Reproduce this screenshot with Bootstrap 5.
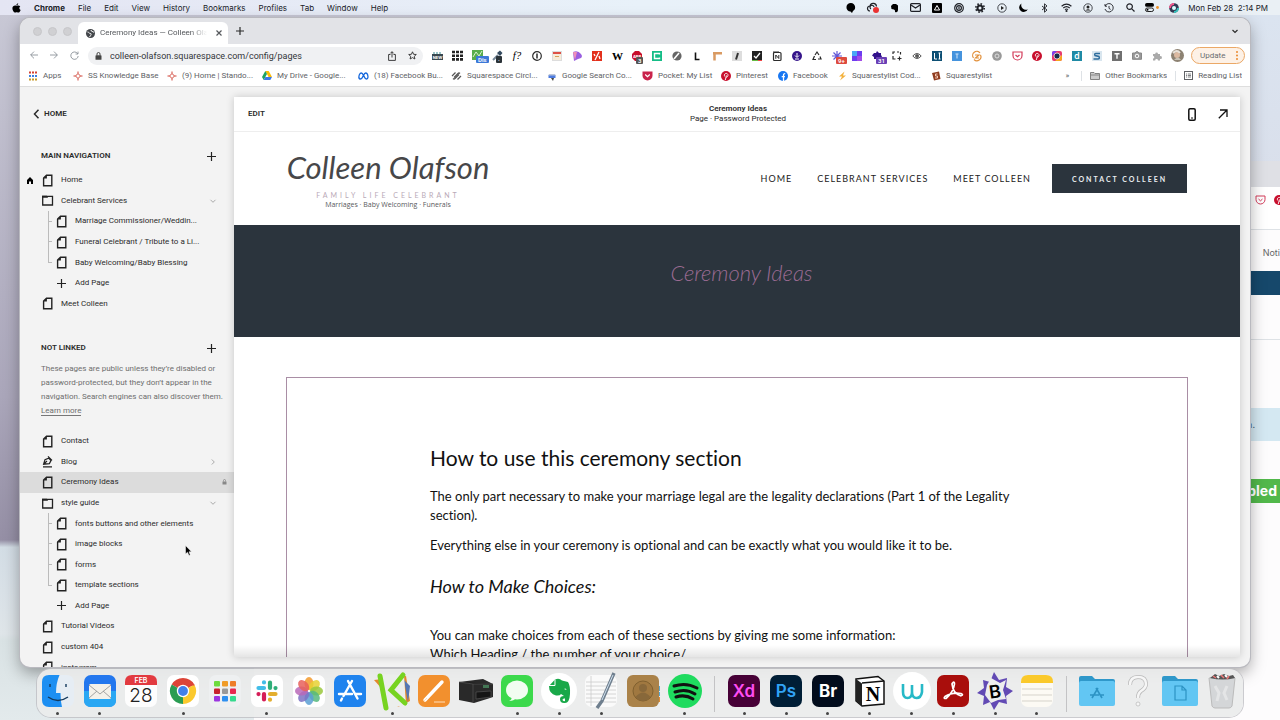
<!DOCTYPE html>
<html lang="en">
<head>
<meta charset="utf-8">
<meta name="viewport" content="width=device-width, initial-scale=1">
<title>Ceremony Ideas — Colleen Olafson</title>
<link href="https://cdn.jsdelivr.net/npm/bootstrap@5.3.0/dist/css/bootstrap.min.css" rel="stylesheet">
<style>
:root{--ink:#2b2b2b;--slate:#2b343d;--plum:#9b6b93}
body{font-family:Inter,"Liberation Sans",sans-serif;font-size:8px;line-height:12px;color:var(--ink);
 background:linear-gradient(#c9c9d6 0,#aaa6ba 55%,#958fa5 75%,#d3dde5 76%,#dfe5e9 88%,#d9e2e4 89%,#e3eaec 100%)}
button{background:none;border:0;padding:0;color:inherit;font:inherit;line-height:inherit}
a{color:inherit;text-decoration:none}
svg{display:block;flex:none;overflow:visible}
svg text{font-family:Inter,"Liberation Sans",sans-serif;text-anchor:middle}
.line-ico{fill:none;stroke:currentColor;stroke-width:1.2}
.menubar{height:15px;background:linear-gradient(90deg,#e4e5f3,#e8f1f9 50%,#eaf0f5);color:#202228;padding:0 12px}
.menus{gap:13px}
.menu-status{width:344px}
.menu-status>*{flex:1 1 0;display:flex;justify-content:center}
.wall-right{right:0;top:0;width:60px;height:200px;background:linear-gradient(#dbe4f0,#d9deea)}
.win-back{left:254px;right:-16px;top:146px;bottom:0;background:#fdfcfd;border-radius:10px 0 0 0}
.back-tabs{height:26px;background:#dfe0e5}
.win-main{font-family:Roboto,"Liberation Sans",sans-serif;left:20px;right:30px;top:3px;bottom:53px;background:#f3f3f3;border-radius:10px;overflow:hidden;box-shadow:0 0 0 1px #b9b9bf,0 6px 16px rgba(0,0,0,.35)}
.tabstrip{height:26px;background:#e2e3e7}
.traffic{width:58px;gap:6px;padding-left:13px}
.traffic i{width:9px;height:9px;border-radius:50%;background:#d0d0d3;border:1px solid #c6c6ca}
.chrome-tab{width:150px;height:22px;background:#fff;border-radius:6px 6px 0 0;padding:0 6px 0 8px;gap:5px;color:#55585c}
.tab-title{white-space:nowrap;overflow:hidden;-webkit-mask-image:linear-gradient(90deg,#000 85%,transparent)}
.toolbar{height:23px;background:#fff;padding-right:5px}
.nav-btns{width:68px;padding-left:4px}
.nav-btns button{width:20px;display:flex;justify-content:center}
.urlbox{height:18px;background:#f0f1f3;border-radius:9px;padding:0 6px 0 7px}
.urlbox input{border:0;background:none;outline:0;font-size:9px;padding:0;height:16px;min-width:0;color:#333539}
.exts{width:760px;margin-left:4px}
.exts button{flex:1 1 0;display:flex;justify-content:center;position:relative}
.pin{position:absolute;left:9px;top:6px;border-radius:1px;color:#fff;font-size:6px;line-height:7px;padding:0 2px;font-weight:600}
.update{height:17px;width:54px;border:1px solid #eba866;border-radius:9px;background:#fdf1e6;color:#6a6d70;padding:0 6px 0 8px}
.bookmarks{height:20px;background:#fff;border-bottom:1px solid #dedede;color:#606266;padding:0 8px 2px}
.bm-grid{display:grid;grid-template-columns:45px 94px 95px 96px 93px 96px 95px 79px 57px 60px 93px 66px}
.bm-grid a,.bm-right a{display:flex;align-items:center;gap:5px;white-space:nowrap;overflow:hidden}
.side{width:214px;padding-top:19px}
.side-head{padding:0 16px 0 21px;font-weight:600;height:16px}
.tree{list-style:none;margin:0;padding:0;display:flex;flex-direction:column}
.tree li{flex:1 1 0;display:flex;align-items:center;padding:0 17px 0 21px;position:relative}
.tree li>svg:first-child{width:13px;margin-right:7px}
.tree li.sub{padding-left:35px}
.branch::before{content:"";position:absolute;left:28px;top:0;bottom:10px;width:4px;border-left:1px solid #bbb;border-bottom:1px solid #bbb}
.branch + .branch::before{top:-11px}
.tree-main{height:144px}
.tree-more{height:247px}
.tree .picked{background:#dcdcdc;padding-right:7px}
.home-mark{position:absolute;left:7px}
.note{color:#6e6e6e;line-height:14px;padding-left:21px;margin:0;white-space:nowrap}
.note a{border-bottom:1px solid #777}
.preview{margin:10px 10px 10px 0;background:#fff;overflow:hidden;box-shadow:0 0 8px rgba(0,0,0,.18);position:relative}
.pv-bar{height:35px;border-bottom:1px solid #eee;padding:0 12px 0 14px}
.pv-title{line-height:10px}
.pv-tools{gap:22px}
.site-head{height:93px;padding:0 53px 0 52px}
.logo{width:204px;text-align:center;color:#58595b}
.logo-name{font-family:Lato,sans-serif;font-style:italic;font-weight:400;font-size:31px;line-height:38px;color:#474749;white-space:nowrap}
.logo-kind{font-family:Lato,sans-serif;font-size:7px;line-height:10px;letter-spacing:3px;color:#b9a9b7}
.logo-tags{font-family:"Open Sans",sans-serif;font-size:7px;line-height:10px}
.site-nav{font-family:Lato,sans-serif;font-size:9px;letter-spacing:1px;gap:25px;color:#222}
.cta{font-family:Lato,sans-serif;font-weight:700;background:var(--slate);color:#e9edf0;font-size:7px;letter-spacing:2px;width:135px;height:29px;margin-left:21px}
.banner{height:112px;background:var(--slate);padding-top:33px;padding-left:9px}
.banner h1{font-family:Lato,sans-serif;font-style:italic;font-weight:300;font-size:22px;line-height:30px;color:var(--plum);margin:0}
.article{margin:40px 52px 0;border:1px solid #a98ea5;height:400px;padding:65px 143px 0;font-family:Lato,sans-serif;font-variant-ligatures:none;color:#111}
.article h2{font-size:21px;line-height:30px;font-weight:400;margin:0 0 14px}
.article p{font-size:13px;line-height:19px;margin:0 0 11px}
.article h3{font-size:18px;line-height:24px;font-style:italic;font-weight:400;margin:19px 0 28px}
.fade-end{left:0;right:0;bottom:0;height:12px;background:linear-gradient(transparent,rgba(0,0,0,.1))}
.pointer{left:185px;top:530px}
.dock{left:37px;right:37px;bottom:3px;height:48px;border-radius:14px;background:rgba(235,236,236,.93);box-shadow:0 0 0 1px rgba(190,190,195,.8)}
.app{flex:1 1 0;display:flex;justify-content:center;position:relative;padding-top:5px}
.app svg{width:34px;height:34px}
.running::after{content:"";position:absolute;bottom:2px;width:3px;height:3px;border-radius:50%;background:#444}
.dock-sep{width:18px;padding:7px 0 5px}
.dock-sep::before{content:"";display:block;width:1px;height:100%;background:#c3c3c5;margin:auto}
</style>
</head>
<body class="vh-100 overflow-hidden d-flex flex-column">
<svg width="0" height="0" class="position-absolute" aria-hidden="true">
 <symbol id="page" viewBox="0 0 13 13"><path d="M5.500 1.200H10.800V11.800H2.600V4z" fill="none" stroke="#222" stroke-width="1.400"/><path d="M5.900 1v3.400H2.400z" fill="#222"/></symbol>
 <symbol id="folder" viewBox="0 0 13 13"><path d="M1.700 2.400H11.500V11H1.700z" fill="none" stroke="#222" stroke-width="1.300"/><path d="M1 1.800h5l1 2H1z" fill="#222"/></symbol>
 <symbol id="plus" viewBox="0 0 13 13"><path d="M6.500 2v9M2 6.500h9" stroke="#222" stroke-width="1.200"/></symbol>
 <symbol id="blog" viewBox="0 0 13 13"><path d="M2 11.800h9M2.600 9.200L4 4.600 7.600 3.200 10 5.600 8.400 8.600zM7 1.400l4 4M3 8.800l3-2.800" fill="none" stroke="#222" stroke-width="1.200"/></symbol>
 <symbol id="down" viewBox="0 0 8 8"><path d="M1.500 2.800L4 5.300 6.500 2.800" fill="none" stroke="#aaa" stroke-width="1"/></symbol>
 <symbol id="star4" viewBox="0 0 10 10"><path d="M5 .5v2M5 7.500v2M.5 5h2M7.500 5h2M2.500 5L5 2.500 7.500 5 5 7.500z" stroke="#d0463a" fill="none"/></symbol>
 <symbol id="pin-p" viewBox="0 0 10 10"><circle cx="5" cy="5" r="5" fill="#c8102e"/><path d="M4.300 9L5.400 4.400M3.600 5.400C2.800 3.600 4 2.300 5.300 2.400 8 2.600 7 6.700 5 6.200" fill="none" stroke="#fff" stroke-width=".9"/></symbol>
</svg>

<nav class="menubar d-flex align-items-center justify-content-between flex-shrink-0 position-relative" aria-label="System menu">
 <div class="menus d-flex align-items-center">
  <svg width="9" height="10" viewBox="0 0 9 10"><path d="M6.200.2C6.200 1.300 5.300 2.200 4.400 2.200 4.300 1.200 5.300.300 6.200.200zM8.300 3.400C6.800 4.300 7.100 6.300 8.600 6.900 8.200 8.200 7.300 9.600 6.400 9.600 5.700 9.600 5.500 9.200 4.700 9.200S3.600 9.600 3 9.600C1.700 9.600.400 7.200.400 5.300.400 2.300 3.200 2.100 4.600 2.800 5.700 2.200 7.400 2.200 8.300 3.400z"/></svg>
  <button class="fw-bold">Chrome</button><button>File</button><button>Edit</button><button>View</button><button>History</button><button>Bookmarks</button><button>Profiles</button><button>Tab</button><button>Window</button><button>Help</button>
 </div>
 <div class="d-flex align-items-center">
  <div class="menu-status d-flex align-items-center">
   <span><svg width="10" height="10" viewBox="0 0 10 10"><path d="M5 0a4.300 4.300 0 0 1 2 8L6 10 4.500 8.600A4.300 4.300 0 0 1 5 0z"/></svg></span>
   <span><svg width="12" height="10" viewBox="0 0 12 10"><path d="M3 8a2.500 2.500 0 0 1 0-5A3.300 3.300 0 0 1 9.500 3.500M4 6a2 2 0 1 1 3-2" class="line-ico"/><circle cx="9" cy="7" r="3" fill="#e33"/></svg></span>
   <span><svg width="9" height="10" viewBox="0 0 9 10"><path d="M1 3l2-2h3l2 1.500v4C8 9 7 9.500 5 9V7.500L4 6.500 1.500 6z"/></svg></span>
   <span><svg width="11" height="9" viewBox="0 0 11 9" class="line-ico"><rect x=".6" y=".6" width="9.800" height="7.800" rx="1"/><path d="M1 2l4.500 3L10 2"/></svg></span>
   <span><svg width="10" height="10" viewBox="0 0 10 10"><rect width="10" height="10" rx="1"/><path d="M5 2.500L7.600 7H2.400z" fill="none" stroke="#fff"/></svg></span>
   <span><svg width="10" height="10" viewBox="0 0 10 10" class="line-ico"><circle cx="5" cy="5" r="4.300"/><circle cx="5" cy="5" r="2.400"/><path d="M5 3.600v2.800"/></svg></span>
   <span><svg width="10" height="10" viewBox="0 0 10 10" class="line-ico"><circle cx="5" cy="5" r="2.500" stroke-width="2"/><circle cx="5" cy="5" r="4.200" stroke-dasharray="1.600 1.700" stroke-width="1.600"/></svg></span>
   <span><svg width="10" height="10" viewBox="0 0 10 10" class="line-ico"><circle cx="5" cy="5" r="4.200" stroke-width=".8"/><path d="M4 3l3 2-3 2z" fill="#222" stroke="none"/></svg></span>
   <span><svg width="9" height="9" viewBox="0 0 9 9"><path d="M2.500.500A4.500 4.500 0 1 0 8.800 6.200 4.600 4.600 0 0 1 2.500.500z"/></svg></span>
   <span><svg width="7" height="10" viewBox="0 0 7 10" class="line-ico"><path d="M1 3l5 4-2.500 2.200V.8L6 3 1 7" stroke-width=".9"/></svg></span>
   <span><svg width="11" height="9" viewBox="0 0 11 9" class="line-ico"><path d="M.6 3.200Q5.500-1 10.400 3.200M2.300 5Q5.500 2.200 8.700 5M4 6.600Q5.500 5.400 7 6.600"/><circle cx="5.500" cy="8" r=".5"/></svg></span>
   <span><svg width="10" height="10" viewBox="0 0 10 10" class="line-ico"><circle cx="5" cy="5" r="4.200" stroke-width=".8"/><circle cx="5" cy="4" r="1.500" fill="#222" stroke="none"/><path d="M2.500 7.500Q5 5 7.500 7.500z" fill="#222" stroke="none"/></svg></span>
   <span><svg width="10" height="10" viewBox="0 0 10 10" class="line-ico"><path d="M1.200 3A4.200 4.200 0 1 1 1 6M1 1v2.200h2M5 3v2.400l1.600 1" stroke-width=".9"/></svg></span>
   <span><svg width="9" height="9" viewBox="0 0 9 9" class="line-ico"><circle cx="3.600" cy="3.600" r="2.800"/><path d="M5.800 5.800L8.500 8.500"/></svg></span>
   <span><svg width="14" height="9" viewBox="0 0 14 9"><rect width="9" height="3.800" rx="1.900"/><rect x=".5" y="5" width="8" height="3.500" rx="1.700" fill="none" stroke="#222"/><circle cx="2.500" cy="6.800" r="1"/><circle cx="12.500" cy="4.500" r="1.400" fill="#f0932b"/></svg></span>
   <span><svg width="10" height="10" viewBox="0 0 10 10"><circle cx="5" cy="5" r="4.800" fill="#333a55"/><path d="M5 1a4 4 0 0 0-4 4" stroke="#f2558b" stroke-width="2" fill="none"/><path d="M9 5a4 4 0 0 1-4 4" stroke="#35c6c0" stroke-width="2" fill="none"/><circle cx="5" cy="5" r="2" fill="#dff"/></svg></span>
  </div>
  <time class="text-nowrap ms-1">Mon Feb 28&nbsp; 2:14 PM</time>
 </div>
</nav>

<main class="flex-fill position-relative">
 <div class="wall-right position-absolute"></div>
 <section class="win-back position-absolute overflow-hidden" aria-label="Background window">
  <div class="back-tabs"></div>
  <div class="d-flex justify-content-end align-items-center pe-2 bg-white border-bottom gap-2" style="height:43px">
   <svg class="mb-3" width="11" height="10" viewBox="0 0 11 10" fill="none" stroke="#d33a59"><path d="M1 1h9v3.500a4.500 4.500 0 0 1-9 0zM3.500 4l2 1.800L7.500 4"/></svg>
   <svg class="mb-3 me-1" width="10" height="10"><use href="#pin-p"/></svg>
  </div>
  <div class="pt-1 d-flex align-items-center justify-content-end" style="height:41px;padding-right:16px;font-size:9px;color:#666">Noti</div>
  <div style="height:24px;background:#16486b"></div>
  <div class="border-bottom" style="height:45px"></div>
  <div style="height:68px"></div>
  <div class="d-flex justify-content-end align-items-center" style="height:33px;background:#d4e8f2;padding-right:41px;font-size:9px;color:#467">section.</div>
  <div style="height:38px"></div>
  <div class="d-flex justify-content-end align-items-center text-white fw-bold" style="height:24px;background:#52b84b;padding-right:19px;font-size:14px">Enabled</div>
 </section>

 <section class="win-main position-absolute d-flex flex-column" aria-label="Chrome window">
  <div class="tabstrip d-flex align-items-center flex-shrink-0">
   <div class="traffic d-flex"><i></i><i></i><i></i></div>
   <div class="chrome-tab d-flex align-items-center align-self-end">
    <svg width="9" height="9" viewBox="0 0 9 9"><circle cx="4.500" cy="4.500" r="4.500" fill="#44474b"/><path d="M1.500 3c1.500 0 1.500 1.500 3 1.500S4.500 7 3.500 8M5 1c0 2 2 1 3 2.500" stroke="#fff" fill="none"/></svg>
    <span class="tab-title flex-fill">Ceremony Ideas — Colleen Olafson</span>
    <button class="ms-1" aria-label="Close tab"><svg width="6" height="6" viewBox="0 0 6 6" class="line-ico"><path d="M.5.5l5 5M5.500.500l-5 5"/></svg></button>
   </div>
   <button class="ms-2" aria-label="New tab"><svg width="8" height="8" viewBox="0 0 8 8" class="line-ico"><path d="M4 0v8M0 4h8"/></svg></button>
   <button class="ms-auto me-2 pe-1" aria-label="Search tabs"><svg width="6" height="5" viewBox="0 0 6 5" class="line-ico"><path d="M.5 1L3 3.500 5.500 1"/></svg></button>
  </div>

  <div class="toolbar d-flex align-items-center flex-shrink-0">
   <div class="nav-btns d-flex text-secondary">
    <button aria-label="Back"><svg width="8" height="8" viewBox="0 0 8 8" class="line-ico" opacity=".7"><path d="M8 4H.8M4 .6L.6 4 4 7.400" stroke-width="1"/></svg></button>
    <button aria-label="Forward"><svg width="8" height="8" viewBox="0 0 8 8" class="line-ico" opacity=".7"><path d="M0 4h7.200M4 .6L7.400 4 4 7.400" stroke-width="1"/></svg></button>
    <button aria-label="Reload"><svg width="9" height="9" viewBox="0 0 9 9" class="line-ico" opacity=".7"><path d="M7.600 2.600A3.700 3.700 0 1 0 8.200 5M8 .6v2.400H5.600" stroke-width="1"/></svg></button>
   </div>
   <div class="urlbox flex-fill d-flex align-items-center gap-2">
    <svg width="7" height="8" viewBox="0 0 7 8"><rect x=".5" y="3.300" width="6" height="4.500" rx=".6" fill="#444"/><path d="M2 3.500V2a1.500 1.500 0 0 1 3 0v1.500" fill="none" stroke="#444"/></svg>
    <input class="flex-fill" aria-label="Address" value="colleen-olafson.squarespace.com/config/pages">
    <button aria-label="Share"><svg width="8" height="10" viewBox="0 0 8 10" class="line-ico"><path d="M2.500 3.500H.6v5.900h6.800V3.500H5.500M4 6.500V.8M2.300 2.400L4 .7l1.700 1.700" stroke-width=".9"/></svg></button>
    <button class="ms-1" aria-label="Bookmark"><svg width="9" height="9" viewBox="0 0 9 9" class="line-ico"><path d="M4.500.8l1.100 2.500 2.700.2-2 1.800.6 2.700-2.400-1.400L2.100 8l.6-2.700-2-1.800 2.700-.2z" stroke-width=".9"/></svg></button>
   </div>
   <div class="exts d-flex align-items-center">
    <button aria-label="New"><svg width="11" height="11" viewBox="0 0 11 11"><path d="M1 3h9" stroke="#3a8e94" stroke-dasharray="2 1"/><rect y="4" width="11" height="6" fill="#38474f"/><text x="5.500" y="8.800" font-size="4" font-weight="700" fill="#fff">NEW</text></svg></button>
    <button aria-label="Grid"><svg width="11" height="11" viewBox="0 0 11 11"><path d="M0 2h11M0 5.700h11M0 9.400h11" stroke="#222" stroke-width="2.600" stroke-dasharray="3 1"/></svg></button>
    <button aria-label="Display"><svg width="11" height="11" viewBox="0 0 11 11"><rect width="11" height="10" fill="#58ac4c"/><path d="M1 7l3-5 3 4 3-5" stroke="#d9f0d0" fill="none"/></svg><span class="pin" style="background:#3c78d8">Dis</span></button>
    <button aria-label="Picker"><svg width="11" height="11" viewBox="0 0 11 11"><path d="M1 10l5-5" stroke="#789" stroke-width="2"/><path d="M5 3l3 3 2.500-3L8 .500z" fill="#344a5f"/></svg><span class="pin" style="background:#2b3338">·</span></button>
    <button aria-label="Fonts"><svg width="12" height="11" viewBox="0 0 12 11"><text x="6" y="9" font-size="11" font-style="italic" style="font-family:'Liberation Serif',serif">f?</text></svg></button>
    <button aria-label="Info"><svg width="10" height="10" viewBox="0 0 10 10" class="line-ico"><circle cx="5" cy="5" r="4.300"/><path d="M5 2.500v5" stroke-width="1.500"/></svg></button>
    <button aria-label="Calendar"><svg width="10" height="10" viewBox="0 0 10 10"><rect x=".5" y=".5" width="9" height="9" fill="#f7ecd9" stroke="#ddd"/><path d="M1 2h8" stroke="#de5146" stroke-width="2"/><path d="M3 5.500h4" stroke="#d9a05a"/></svg></button>
    <button aria-label="Palette"><svg width="10" height="10" viewBox="0 0 10 10"><path d="M1 1Q6-1 9 3t-3 5L2 10z" fill="#9a5fe0"/><path d="M1 1l4 0-2 8z" fill="#ef8fb8"/></svg></button>
    <button aria-label="Percent"><svg width="10" height="10" viewBox="0 0 10 10"><rect width="10" height="10" fill="#e3301c"/><path d="M3 9l4-8M2 3l1 2M7 5l1 3" stroke="#fff" stroke-width="1.300"/></svg></button>
    <button aria-label="Wikipedia"><svg width="11" height="10" viewBox="0 0 11 10"><text x="5.500" y="9" font-size="11" font-weight="700" style="font-family:'Liberation Serif',serif">W</text></svg></button>
    <button aria-label="Ad blocker"><svg width="10" height="10" viewBox="0 0 10 10"><path d="M3 0h4l3 3v4l-3 3H3L0 7V3z" fill="#c70d2c"/><text x="5" y="6.500" font-size="4" font-weight="700" fill="#fff">ABP</text></svg><span class="pin" style="background:#555">3</span></button>
    <button aria-label="C"><svg width="10" height="10" viewBox="0 0 10 10"><rect width="10" height="10" fill="#15bd87"/><path d="M7.500 3.500V2.500h-5v5h5V6.500" fill="none" stroke="#fff" stroke-width="1.400"/></svg></button>
    <button aria-label="Rocket"><svg width="10" height="10" viewBox="0 0 10 10"><circle cx="5" cy="5" r="4.600" fill="#666"/><path d="M2 8l5-6" stroke="#fff" stroke-width="1.600"/></svg></button>
    <button aria-label="L"><svg width="10" height="10" viewBox="0 0 10 10"><path d="M3.500 1.500v7h4" fill="none" stroke="#111" stroke-width="1.600"/></svg></button>
    <button aria-label="Ruler"><svg width="10" height="10" viewBox="0 0 10 10"><path d="M1 2.200h9M2.500 1v8.500" stroke="#d99a62" stroke-width="2.500"/></svg></button>
    <button aria-label="Script"><svg width="10" height="10" viewBox="0 0 10 10"><rect width="10" height="10" fill="#ddd"/><path d="M6 2L4 8.500" stroke="#333" stroke-width="2"/></svg></button>
    <button aria-label="Brush"><svg width="10" height="10" viewBox="0 0 10 10"><rect width="10" height="10" fill="#222"/><path d="M0 9.500h6" stroke="#6b4"/><path d="M2 5l2 2 4-5" stroke="#fff" fill="none" stroke-width="1.300"/><path d="M6 9.500h4" stroke="#e44"/></svg></button>
    <button aria-label="Notion"><svg width="10" height="10" viewBox="0 0 10 10" class="line-ico"><rect x="1.500" y="1.500" width="7.500" height="8" rx="1"/><path d="M1 1h6M3.800 7.800V4l3 3.500V4" stroke-width="1"/></svg></button>
    <button aria-label="Download"><svg width="10" height="10" viewBox="0 0 10 10"><circle cx="5" cy="5" r="5" fill="#35148a"/><path d="M5 2v4M3 4.500l2 2 2-2M3 8h4" stroke="#fff" fill="none"/></svg></button>
    <button aria-label="Recycle"><svg width="10" height="10" viewBox="0 0 10 10" class="line-ico"><path d="M3 4l2-3 2 3M8 5.500L9 8H6M4 8.500H1L2.500 5" /></svg></button>
    <button aria-label="Loom"><svg width="11" height="10" viewBox="0 0 11 10"><path d="M5 0v10M0 5h10M1.500 1.500l7 7M8.500 1.500l-7 7" stroke="#6257d8" stroke-width="1.200"/></svg><span class="pin" style="background:#dd4b3e">9+</span></button>
    <button aria-label="Color"><svg width="10" height="10" viewBox="0 0 10 10"><rect width="10" height="10" fill="#6d3df0"/><rect width="5" height="5" fill="#4aa7f5"/><rect x="5" y="5" width="5" height="5" fill="#a24be8"/></svg></button>
    <button aria-label="Puzzle"><svg width="10" height="10" viewBox="0 0 10 10"><path d="M5 0l2 2h2v2l1 1.500L8 8H2V6L0 4.500 2 2h2z" fill="#32128c"/></svg><span class="pin" style="background:#6a3fb5">31</span></button>
    <button aria-label="Capture"><svg width="10" height="10" viewBox="0 0 10 10" class="line-ico"><path d="M1 3V1h2M5 1h2M8.500 1v2.500M1 5v3h2.500M7.500 5.500v4M5.500 7.500h4"/></svg></button>
    <button aria-label="Eye"><svg width="10" height="8" viewBox="0 0 10 8" class="line-ico"><path d="M.8 4Q5-1 9.200 4 5 9 .8 4z" stroke-width=".8"/><circle cx="5" cy="4" r="1.200"/></svg></button>
    <button aria-label="LI"><svg width="10" height="10" viewBox="0 0 10 10"><rect width="10" height="10" fill="#0d4f74"/><path d="M2.500 2v6H5M7.500 2v6M6.500 2h2M6.500 8h2" stroke="#fff" fill="none"/></svg></button>
    <button aria-label="Type"><svg width="10" height="10" viewBox="0 0 10 10"><rect width="10" height="10" fill="#4593dd"/><path d="M3.500 3h3M5 3v4.500" stroke="#cfe4fa"/></svg></button>
    <button aria-label="Swirl"><svg width="10" height="10" viewBox="0 0 10 10"><path d="M1.500 7A4 4 0 0 1 8 2M8.500 4A4 4 0 0 1 2 8.500M3 4h4L3.500 7H7" fill="none" stroke="#e2913c" stroke-width="1.200"/></svg></button>
    <button aria-label="Record"><svg width="10" height="10" viewBox="0 0 10 10"><circle cx="5" cy="5" r="4.800" fill="#999"/><circle cx="5" cy="5" r="2" fill="none" stroke="#ddd"/></svg></button>
    <button aria-label="Pocket"><svg width="11" height="10" viewBox="0 0 11 10" fill="none" stroke="#d33a59" stroke-width="1.200"><path d="M1 1h9v3.500a4.500 4.500 0 0 1-9 0zM3.500 4l2 1.800L7.500 4"/></svg></button>
    <button aria-label="Pinterest"><svg width="10" height="10"><use href="#pin-p"/></svg></button>
    <button aria-label="Camera"><svg width="10" height="10" viewBox="0 0 10 10"><rect width="10" height="10" rx="2" fill="#e63b6f"/><path d="M0 5V2Q0 0 2 0h3z" fill="#7a3ff0"/><path d="M10 4v4q0 2-2 2H3z" fill="#f7a61f"/><circle cx="5" cy="5" r="3" fill="#162a4c" stroke="#fff" stroke-width=".7"/></svg></button>
    <button aria-label="D"><svg width="10" height="10" viewBox="0 0 10 10"><rect width="10" height="10" fill="#1f8aa5"/><text x="5" y="8.200" font-size="8.500" font-weight="600" fill="#fff">d</text></svg></button>
    <button aria-label="S"><svg width="10" height="10" viewBox="0 0 10 10"><rect width="10" height="10" fill="#d9e6ef"/><path d="M8 2.500H4Q2 2.500 3 4.500l4 1Q8 8 6 8H1.500" fill="none" stroke="#2e6e9e" stroke-width="1.500"/></svg></button>
    <button aria-label="T"><svg width="10" height="10" viewBox="0 0 10 10"><rect width="10" height="10" fill="#707070"/><path d="M2.500 2.800h5M5 2.800v5" stroke="#fff" stroke-width="1.400"/></svg></button>
    <button aria-label="Screenshot"><svg width="10" height="9" viewBox="0 0 10 9"><path d="M.5 2H3L4 .8h2L7 2h2.500v6.300h-9z" fill="#999" stroke="#888"/><circle cx="5" cy="5" r="1.800" fill="none" stroke="#fff"/></svg></button>
    <button aria-label="Extensions"><svg width="10" height="10" viewBox="0 0 10 10"><path d="M1 3h2.200A1.400 1.400 0 1 1 6 3h2v2.200a1.400 1.400 0 1 1 0 2.600V9.500H6A1.400 1.400 0 1 0 3.200 9.500H1V7.500A1.200 1.200 0 1 0 1 5z" fill="#aaa"/></svg></button>
    <button aria-label="Profile"><svg width="13" height="13" viewBox="0 0 13 13"><circle cx="6.500" cy="6.500" r="6.500" fill="#8d8272"/><circle cx="6" cy="6" r="3" fill="#dcb9a0"/><path d="M2 4Q6 0 9 4" stroke="#e9e2d9" stroke-width="2" fill="none"/><path d="M3 11Q7 6 10 11" fill="#c9c4b8"/></svg></button>
   </div>
   <button class="update ms-1 d-flex align-items-center justify-content-between">Update<svg width="2" height="9" viewBox="0 0 2 9" fill="#eb8a2f"><circle cx="1" cy="1" r="1"/><circle cx="1" cy="4.500" r="1"/><circle cx="1" cy="8" r="1"/></svg></button>
  </div>

  <nav class="bookmarks d-flex align-items-center justify-content-between flex-shrink-0" aria-label="Bookmarks">
   <div class="bm-grid">
    <a href="#"><svg width="10" height="10" viewBox="0 0 10 10"><path d="M1 1.500h8" stroke="#d44332" stroke-width="2" stroke-dasharray="2 1"/><path d="M1 5h8" stroke="#3c7fe0" stroke-width="2" stroke-dasharray="2 1"/><path d="M1 8.500h8" stroke="#c79a2a" stroke-width="2" stroke-dasharray="2 1"/></svg>Apps</a>
    <a href="#"><svg width="10" height="10"><use href="#star4"/></svg>SS Knowledge Base</a>
    <a href="#"><svg width="10" height="10"><use href="#star4"/></svg>(9) Home | Stando...</a>
    <a href="#"><svg width="10" height="9" viewBox="0 0 10 9"><path d="M3.300 0h3.400L10 6H6.600z" fill="#fbbc04"/><path d="M3.300 0L0 6l1.700 3L5 3z" fill="#1ea362"/><path d="M3.400 6H10L8.300 9H1.700z" fill="#3c78e6"/></svg>My Drive - Google...</a>
    <a href="#"><svg width="11" height="8" viewBox="0 0 11 8"><path d="M1 6.500C.5 3 2 1 3.300 1 5.500 1 6 7 8.500 7 11 7 10 1 7.700 1 5.500 1 5 7 2.500 7Q1.200 7 1 6z" fill="none" stroke="#1668dc" stroke-width="1.300"/></svg>(18) Facebook Bu...</a>
    <a href="#"><svg width="11" height="10" viewBox="0 0 11 10" fill="none" stroke="#555"><path d="M1 5l3.500-3.500M3 6.500l4-4q1-1 2 0M2 7.500q1 1 2 0l4-4M6.500 8.500L10 5" stroke-width="1.200"/></svg>Squarespace Circl...</a>
    <a href="#"><svg width="10" height="10" viewBox="0 0 10 10"><path d="M1 5l1-2h6l1 2z" fill="#bcc6d8"/><rect x="1.500" y="4.500" width="7" height="2.500" fill="#4c7be0"/><path d="M4 7l2 3 1-3z" fill="#444"/></svg>Google Search Co...</a>
    <a href="#"><svg width="11" height="10" viewBox="0 0 11 10"><path d="M.5.5h10v4a5 5 0 0 1-10 0z" fill="#c9244c"/><path d="M3.200 3.500l2.300 2.200 2.300-2.200" stroke="#fff" stroke-width="1.200" fill="none"/></svg>Pocket: My List</a>
    <a href="#"><svg width="10" height="10"><use href="#pin-p"/></svg>Pinterest</a>
    <a href="#"><svg width="10" height="10" viewBox="0 0 10 10"><circle cx="5" cy="5" r="5" fill="#1877f2"/><path d="M5.500 10V4q0-1.500 1.700-1.300M3.700 5.600h3.200" stroke="#fff" stroke-width="1.300" fill="none"/></svg>Facebook</a>
    <a href="#"><svg width="9" height="10" viewBox="0 0 9 10"><path d="M6.500.500L1 5.500h3L2 9.500l6-5H5z" fill="#f3b13c"/></svg>Squarestylist Cod...</a>
    <a href="#"><svg width="10" height="10" viewBox="0 0 10 10"><path d="M1 2l7-1.500L9.500 8 3 9.500z" fill="#8f3d20"/><path d="M6.500 3H4.500v2h2v2H4" stroke="#f3c9b5" fill="none"/></svg>Squarestylist</a>
   </div>
   <div class="bm-right d-flex align-items-center gap-2">
    <button class="me-1" aria-label="More bookmarks">»</button><span class="border-start" style="height:10px"></span>
    <a href="#"><svg width="10" height="8" viewBox="0 0 10 8"><path d="M.5.5h3.500l1 1h4.500v6h-9z" fill="#ccc" stroke="#777" stroke-width=".9"/><path d="M1 3h8" stroke="#777" stroke-width=".8"/></svg>Other Bookmarks</a><span class="border-start" style="height:10px"></span>
    <a href="#"><svg width="9" height="9" viewBox="0 0 9 9" class="line-ico"><rect x=".5" y=".5" width="8" height="8" stroke-width="1"/><path d="M2 3h1.200M4 3h3M2 4.500h1.200M4 4.500h3M2 6h1.200M4 6h3" stroke-width=".8"/></svg>Reading List</a>
   </div>
  </nav>

  <div class="d-flex flex-fill overflow-hidden">
   <aside class="side flex-shrink-0">
    <a href="#" class="d-flex align-items-center gap-1 fw-semibold" style="height:16px;padding-left:13px"><svg width="7" height="10" viewBox="0 0 7 10" class="line-ico"><path d="M5.500.800L1.500 5l4 4.200" stroke-width="1.500"/></svg>HOME</a>
    <div class="side-head d-flex align-items-center justify-content-between" style="margin-top:26px"><span>MAIN NAVIGATION</span><button aria-label="Add page to main navigation"><svg width="13" height="13"><use href="#plus"/></svg></button></div>
    <ul class="tree tree-main" style="margin-top:6px">
     <li><svg width="13" height="13"><use href="#page"/></svg><svg class="home-mark" width="6" height="7" viewBox="0 0 6 7"><path d="M0 3l3-3 3 3v4H4V4.500H2V7H0z"/></svg><a href="#">Home</a></li>
     <li><svg width="13" height="13"><use href="#folder"/></svg><a href="#">Celebrant Services</a><svg class="ms-auto" width="8" height="8"><use href="#down"/></svg></li>
     <li class="sub branch"><svg width="13" height="13"><use href="#page"/></svg><a href="#">Marriage Commissioner/Weddin...</a></li>
     <li class="sub branch"><svg width="13" height="13"><use href="#page"/></svg><a href="#">Funeral Celebrant / Tribute to a Li...</a></li>
     <li class="sub branch"><svg width="13" height="13"><use href="#page"/></svg><a href="#">Baby Welcoming/Baby Blessing</a></li>
     <li class="sub"><svg width="13" height="13"><use href="#plus"/></svg><button>Add Page</button></li>
     <li><svg width="13" height="13"><use href="#page"/></svg><a href="#">Meet Colleen</a></li>
    </ul>
    <div class="side-head d-flex align-items-center justify-content-between" style="margin-top:26px"><span>NOT LINKED</span><button aria-label="Add unlinked page"><svg width="13" height="13"><use href="#plus"/></svg></button></div>
    <p class="note" style="margin-top:6px">These pages are public unless they’re disabled or<br>password-protected, but they don’t appear in the<br>navigation. Search engines can also discover them.<br><a href="#">Learn more</a></p>
    <ul class="tree tree-more" style="margin-top:13px">
     <li><svg width="13" height="13"><use href="#page"/></svg><a href="#">Contact</a></li>
     <li><svg width="13" height="13"><use href="#blog"/></svg><a href="#">Blog</a><svg class="ms-auto" width="8" height="8" viewBox="0 0 8 8"><path d="M2.800 1.500L5.300 4 2.800 6.500" fill="none" stroke="#aaa"/></svg></li>
     <li class="picked"><svg width="13" height="13"><use href="#page"/></svg><a href="#">Ceremony Ideas</a><svg class="ms-auto" width="5" height="6" viewBox="0 0 5 6"><rect x=".5" y="2.500" width="4" height="3" fill="#888"/><path d="M1.500 2.500V1.500a1 1 0 0 1 2 0v1" fill="none" stroke="#888" stroke-width=".8"/></svg></li>
     <li><svg width="13" height="13"><use href="#folder"/></svg><a href="#">style guide</a><svg class="ms-auto" width="8" height="8"><use href="#down"/></svg></li>
     <li class="sub branch"><svg width="13" height="13"><use href="#page"/></svg><a href="#">fonts buttons and other elements</a></li>
     <li class="sub branch"><svg width="13" height="13"><use href="#page"/></svg><a href="#">image blocks</a></li>
     <li class="sub branch"><svg width="13" height="13"><use href="#page"/></svg><a href="#">forms</a></li>
     <li class="sub branch"><svg width="13" height="13"><use href="#page"/></svg><a href="#">template sections</a></li>
     <li class="sub"><svg width="13" height="13"><use href="#plus"/></svg><button>Add Page</button></li>
     <li><svg width="13" height="13"><use href="#page"/></svg><a href="#">Tutorial Videos</a></li>
     <li><svg width="13" height="13"><use href="#page"/></svg><a href="#">custom 404</a></li>
     <li><svg width="13" height="13"><use href="#page"/></svg><a href="#">instagram</a></li>
    </ul>
   </aside>

   <div class="preview flex-fill">
    <div class="pv-bar d-grid align-items-center" style="grid-template-columns:1fr auto 1fr">
     <button class="fw-semibold text-start">EDIT</button>
     <div class="pv-title text-center"><div class="fw-semibold">Ceremony Ideas</div><div>Page · Password Protected</div></div>
     <div class="pv-tools d-flex justify-content-end align-items-center">
      <button aria-label="Mobile view"><svg width="8" height="13" viewBox="0 0 8 13"><rect x=".8" y=".8" width="6.400" height="11.400" rx="1.200" fill="none" stroke="#111" stroke-width="1.500"/><path d="M3 10h2" stroke="#111"/></svg></button>
      <button aria-label="Open full view"><svg width="10" height="10" viewBox="0 0 10 10"><path d="M.8 9.200L9 1M2 1h7v7" fill="none" stroke="#111" stroke-width="1.300"/></svg></button>
     </div>
    </div>
    <header class="site-head d-flex align-items-center">
     <a href="#" class="logo d-block"><div class="logo-name">Colleen Olafson</div><div class="logo-kind mt-1">FAMILY LIFE CELEBRANT</div><div class="logo-tags">Marriages · Baby Welcoming · Funerals</div></a>
     <nav class="site-nav d-flex ms-auto" aria-label="Site"><a href="#">HOME</a><a href="#">CELEBRANT SERVICES</a><a href="#">MEET COLLEEN</a></nav>
     <button class="cta">CONTACT COLLEEN</button>
    </header>
    <div class="banner text-center"><h1>Ceremony Ideas</h1></div>
    <article class="article">
     <h2>How to use this ceremony section</h2>
     <p>The only part necessary to make your marriage legal are the legality declarations (Part 1 of the Legality section).</p>
     <p>Everything else in your ceremony is optional and can be exactly what you would like it to be.</p>
     <h3>How to Make Choices:</h3>
     <p>You can make choices from each of these sections by giving me some information:<br>Which Heading / the number of your choice/</p>
    </article>
    <div class="fade-end position-absolute"></div>
   </div>
  </div>
 </section>

 <svg class="pointer position-absolute" width="9" height="12" viewBox="0 0 9 12"><path d="M.5.5v8.500l2-1.800L4 10.500l1.300-.6L4 6.800h2.500z" stroke="#fff" stroke-width=".5"/></svg>

 <nav class="dock position-absolute d-flex" aria-label="Dock">
  <a href="#" class="app running" aria-label="Finder"><svg viewBox="0 0 34 34"><rect x="1" y="1" width="32" height="32" rx="7" fill="#e6edf4"/><path d="M8 1h10.500q-3.500 8-3.500 18h4.500q0 8 1.500 14H8q-7 0-7-7V8q0-7 7-7z" fill="#1d8ff2"/><path d="M9 10v3M25 10v3M7 23q10 7 20 0" fill="none" stroke="#14395c" stroke-width="1.400"/></svg></a>
  <a href="#" class="app running" aria-label="Mail"><svg viewBox="0 0 34 34"><rect x="1" y="1" width="32" height="32" rx="7" fill="#2377ee"/><path d="M1 17h32v9q0 7-7 7H8q-7 0-7-7z" fill="#29a7f3"/><rect x="6" y="10" width="22" height="15" rx="1.500" fill="#f4f1ea"/><path d="M6 11l11 9 11-9M6 24l8-7M28 24l-8-7" fill="none" stroke="#999" stroke-width=".9"/></svg></a>
  <a href="#" class="app" aria-label="Calendar"><svg viewBox="0 0 34 34"><rect x="1" y="1" width="32" height="32" rx="7" fill="#fdfdfd"/><path d="M1 11V8q0-7 7-7h18q7 0 7 7v3z" fill="#e23a40"/><text x="17" y="9" font-size="7" font-weight="600" fill="#fff">FEB</text><text x="17" y="28" font-size="19" font-weight="300" fill="#222">28</text></svg></a>
  <a href="#" class="app running" aria-label="Chrome"><svg viewBox="0 0 34 34"><rect x="1" y="1" width="32" height="32" rx="7" fill="#fff"/><path d="M17 17L5.700 10.500A13 13 0 0 1 28.300 10.500z" fill="#dc4437"/><path d="M17 17L28.300 10.500A13 13 0 0 1 17 30z" fill="#fbc92d"/><path d="M17 17v13A13 13 0 0 1 5.700 10.500z" fill="#2a9c52"/><path d="M17 11h11.500" stroke="#dc4437" stroke-width="1"/><circle cx="17" cy="17" r="6.200" fill="#fff"/><circle cx="17" cy="17" r="4.900" fill="#4280ea"/></svg></a>
  <a href="#" class="app" aria-label="Launchpad"><svg viewBox="0 0 34 34"><rect x="1" y="1" width="32" height="32" rx="7" fill="#eef0f1"/><g><rect x="6" y="7" width="6" height="5.500" rx="1" fill="#6ddb3d"/><rect x="14" y="7" width="6" height="5.500" rx="1" fill="#f09b26"/><rect x="22" y="7" width="6" height="5.500" rx="1" fill="#ee7d28"/><rect x="6" y="14.500" width="6" height="5.500" rx="1" fill="#c7222d"/><rect x="14" y="14.500" width="6" height="5.500" rx="1" fill="#999"/><rect x="22" y="14.500" width="6" height="5.500" rx="1" fill="#e8264f"/><rect x="6" y="22" width="6" height="5.500" rx="1" fill="#9b35e0"/><rect x="14" y="22" width="6" height="5.500" rx="1" fill="#2d8ff0"/><rect x="22" y="22" width="6" height="5.500" rx="1" fill="#35d98d"/></g></svg></a>
  <a href="#" class="app running" aria-label="Slack"><svg viewBox="0 0 34 34"><rect x="1" y="1" width="32" height="32" rx="7" fill="#fff"/><g stroke-width="4.200" stroke-linecap="round"><path d="M8.500 14H14M14 8.300v.1" stroke="#42bde8"/><path d="M20 8.500V14M25.500 14v.1" stroke="#2fae79"/><path d="M20 20h5.500M20 25.600v.1" stroke="#e3ae2f"/><path d="M14 20v5.500M8.500 20v.1" stroke="#d51e58"/></g></svg></a>
  <a href="#" class="app" aria-label="Photos"><svg viewBox="0 0 34 34"><rect x="1" y="1" width="32" height="32" rx="7" fill="#fff"/><g fill-opacity=".85"><ellipse cx="17" cy="9.500" rx="4.500" ry="6.500" fill="#f39a2b"/><ellipse cx="17" cy="9.500" rx="4.500" ry="6.500" fill="#e8d132" transform="rotate(45 17 17)"/><ellipse cx="17" cy="9.500" rx="4.500" ry="6.500" fill="#9ac83c" transform="rotate(90 17 17)"/><ellipse cx="17" cy="9.500" rx="4.500" ry="6.500" fill="#56b97e" transform="rotate(135 17 17)"/><ellipse cx="17" cy="9.500" rx="4.500" ry="6.500" fill="#5a9fd4" transform="rotate(180 17 17)"/><ellipse cx="17" cy="9.500" rx="4.500" ry="6.500" fill="#7d72c4" transform="rotate(225 17 17)"/><ellipse cx="17" cy="9.500" rx="4.500" ry="6.500" fill="#b968b8" transform="rotate(270 17 17)"/><ellipse cx="17" cy="9.500" rx="4.500" ry="6.500" fill="#e8605a" transform="rotate(315 17 17)"/></g></svg></a>
  <a href="#" class="app" aria-label="App Store"><svg viewBox="0 0 34 34"><rect x="1" y="1" width="32" height="32" rx="7" fill="#1f83ee"/><path d="M19 7L10.500 22M15 7l9.500 17.500M6 20h13M22.500 20H28M9 24.500l-1 2" stroke="#fff" stroke-width="2.400" stroke-linecap="round"/></svg></a>
  <a href="#" class="app running" aria-label="Kdo"><svg viewBox="0 0 34 34"><path d="M-1 6l32-4 4 25-12 6z" fill="#e2892d"/><path d="M29 6l6 6-2 16z" fill="#5476b4"/><path d="M5 0l24 1 2 30-20 4z" fill="#eceeec"/><path d="M5 2l6 32M28 1L16 16l14 13" fill="none" stroke="#77d321" stroke-width="5" stroke-linecap="round"/></svg></a>
  <a href="#" class="app" aria-label="Pages"><svg viewBox="0 0 34 34"><rect x="1" y="1" width="32" height="32" rx="7" fill="#f2902e"/><path d="M8 26L25 8" stroke="#fff" stroke-width="3.400" stroke-linecap="round"/><path d="M7 27l3-3M17 28h11" stroke="#ffe0bd"/></svg></a>
  <a href="#" class="app" aria-label="Scanner"><svg viewBox="0 0 34 34"><path d="M0 8l24-3 10 5v13l-6 2-13 4L0 26z" fill="#292929"/><path d="M0 8l14 2 20 0M14 10v18M17 18l15-1v6l-15 2z" fill="#151515" stroke="#555" stroke-width=".7"/><rect x="24" y="11" width="6" height="3" fill="#475"/></svg></a>
  <a href="#" class="app running" aria-label="Messages"><svg viewBox="0 0 34 34"><rect x="1" y="1" width="32" height="32" rx="7" fill="#3cd94c"/><ellipse cx="17" cy="16" rx="11" ry="9.500" fill="#f1fdf1"/><path d="M12 22q0 4-3 5 5 0 7-3z" fill="#f1fdf1"/></svg></a>
  <a href="#" class="app running" aria-label="Evernote"><svg viewBox="0 0 34 34"><circle cx="17" cy="17" r="18" fill="#fff"/><path d="M7 12l6-6.500q4-2 7 1l6 1.500q2.500 4 2 12-.5 9-5 9-5 .5-5-4 0-3 4-3l-3-2q-1 2-5 1.500Q7 20 7 12z" fill="#19a849"/><path d="M20.500 26q0-2 2.500-1.500v2.500q-2 .5-2.500-1z" fill="#fff"/><path d="M22 15q2-1.500 2.500 1z" fill="#fff"/><path d="M7 11.500h6V5.500" fill="none" stroke="#fff"/></svg></a>
  <a href="#" class="app running" aria-label="TextEdit"><svg viewBox="0 0 34 34"><rect x="1" y="1" width="32" height="32" rx="7" fill="#fafafa"/><path d="M2 8h30M2 12h30M2 16h30M2 20h30M2 24h30M2 28h30M7 2v30" stroke="#ccc" stroke-width=".8"/><path d="M30-1L18 27l-5 7" fill="none" stroke="#6f7f8e" stroke-width="3.400"/><path d="M29 1L18 26" stroke="#cfe0ee"/></svg></a>
  <a href="#" class="app" aria-label="Contacts"><svg viewBox="0 0 34 34"><path d="M32 12h2v5h-2zM32 18h2v4h-2z" fill="#5aa7cf"/><path d="M32 23h2v5h-2z" fill="#df8b34"/><rect x="1" y="1" width="32" height="32" rx="6" fill="#aa8249"/><circle cx="17" cy="17" r="10" fill="#a07840" stroke="#80602f"/><circle cx="17" cy="14" r="4" fill="#88683a"/><path d="M9.500 23q7.500-9 15 0-7.500 8-15 0z" fill="#88683a"/></svg></a>
  <a href="#" class="app running" aria-label="Spotify"><svg viewBox="0 0 34 34"><circle cx="17" cy="17" r="17" fill="#1fdb5f"/><path d="M6 12q12-4 23 2M7 18q11-4 20 2M8 23q9-3 17 2" fill="none" stroke="#111" stroke-width="3" stroke-linecap="round"/></svg></a>
  <div class="dock-sep"></div>
  <a href="#" class="app running" aria-label="Adobe XD"><svg viewBox="0 0 34 34"><rect x="1" y="1" width="32" height="32" rx="7" fill="#470137"/><text x="17" y="23" font-size="17" font-weight="600" fill="#ff4cf2">Xd</text></svg></a>
  <a href="#" class="app running" aria-label="Photoshop"><svg viewBox="0 0 34 34"><rect x="1" y="1" width="32" height="32" rx="7" fill="#001e36"/><text x="17" y="23" font-size="17" font-weight="600" fill="#31a3f5">Ps</text></svg></a>
  <a href="#" class="app running" aria-label="Bridge"><svg viewBox="0 0 34 34"><rect x="1" y="1" width="32" height="32" rx="7" fill="#020c1c"/><text x="17" y="23" font-size="17" font-weight="700" fill="#fff">Br</text></svg></a>
  <a href="#" class="app running" aria-label="Notion"><svg viewBox="0 0 34 34"><path d="M3 5l22-2.500 6 4.500v23L9 32l-6-5z" fill="#fff" stroke="#111" stroke-width="1.500"/><path d="M3 5l6 4.500V32l-6-5z" fill="#222"/><path d="M9 9l22-2" stroke="#111" stroke-width="1.500"/><text x="20" y="27" font-size="20" font-weight="700" style="font-family:'Liberation Serif',serif">N</text></svg></a>
  <a href="#" class="app running" aria-label="Wordtune"><svg viewBox="0 0 34 34"><circle cx="17" cy="17" r="19" fill="#fff"/><path d="M8 10v8q0 6 4.500 6t4.500-6v-7M17 18q0 6 4.500 6t5.500-6v-8" fill="none" stroke="#27b9c7" stroke-width="2.600"/></svg></a>
  <a href="#" class="app running" aria-label="Acrobat"><svg viewBox="0 0 34 34"><rect x="1" y="1" width="32" height="32" rx="7" fill="#a90e0c"/><path d="M16.500 9q2-2 2 1-1 8-8.500 14.500-3 0-1-2Q16 18 25 19.500q3 1.500 0 2.300Q17 20 16 10z" fill="none" stroke="#fff" stroke-width="1.700"/></svg></a>
  <a href="#" class="app running" aria-label="BBEdit"><svg viewBox="0 0 34 34"><path d="M16-2l5 8 8-2-1 9 7 4-7 5 1 8-8-2-5 8-4-8-7 3 1-9-7-3 7-5-1-8 7 2z" fill="#624ab4"/><path d="M13 4l9 5 6-3-3 10 3 9-8 1-7 3-6-8 2-10z" fill="#eee"/><text x="17" y="24" font-size="18" font-weight="600" transform="rotate(-8 17 17)">B</text></svg></a>
  <a href="#" class="app running" aria-label="Notes"><svg viewBox="0 0 34 34"><rect x="1" y="1" width="32" height="32" rx="7" fill="#fcfaf4"/><path d="M1 9V8q0-7 7-7h18q7 0 7 7v1z" fill="#fac92c"/><path d="M2 15h30M2 21h30M2 27h30" stroke="#d6d3cb"/></svg></a>
  <div class="dock-sep"></div>
  <a href="#" class="app" aria-label="Applications"><svg viewBox="0 0 34 34"><path d="M-1 4q0-2 2-2h11l3 3h18q2 0 2 2v10H-1z" fill="#2f98ca"/><rect x="-1" y="7" width="36" height="25" rx="2" fill="#62c6f3"/><path d="M18 14l-6 10M16 14l6 10M10 21h9M21 21h3" stroke="#2c93c4" stroke-width="1.600"/></svg></a>
  <a href="#" class="app" aria-label="Missing item"><svg viewBox="0 0 34 34"><path d="M9 11q0-8 8-8t8 7q0 4-5 7-3 2-3 7" fill="none" stroke="#b8b8b8" stroke-width="4"/><path d="M9 11q0-8 8-8t8 7q0 4-5 7-3 2-3 7" fill="none" stroke="#f6f6f6" stroke-width="2.600"/><circle cx="17" cy="30" r="2" fill="#f6f6f6" stroke="#b8b8b8" stroke-width=".7"/></svg></a>
  <a href="#" class="app" aria-label="Documents"><svg viewBox="0 0 34 34"><path d="M-1 4q0-2 2-2h11l3 3h18q2 0 2 2v10H-1z" fill="#2f98ca"/><rect x="-1" y="7" width="36" height="25" rx="2" fill="#62c6f3"/><path d="M12 12h7l4 4v10H12zM19 12v4h4" fill="none" stroke="#2c93c4" stroke-width="1.200"/></svg></a>
  <a href="#" class="app" aria-label="Trash"><svg viewBox="0 0 34 34"><path d="M4 4h26l-3 28q-1 2-3 2H10q-2 0-3-2z" fill="#d4d6d8" stroke="#bbb"/><path d="M5 4l5-4 4 2 5-2 5 2 4-1 2 3q-12 3-25 0z" fill="#555"/><path d="M8 2l3 2M16 1l3 3M24 2l-2 3" stroke="#e77" stroke-width="1.500"/><path d="M12 2l2 2M20 1l2 2" stroke="#fff" stroke-width="2"/><path d="M10 12l4 7-2 8M22 12l-3 7 3 7" stroke="#e4e5e6" stroke-width="3" fill="none"/></svg></a>
 </nav>
</main>
<script src="https://cdn.jsdelivr.net/npm/bootstrap@5.3.0/dist/js/bootstrap.bundle.min.js"></script>
</body>
</html>
